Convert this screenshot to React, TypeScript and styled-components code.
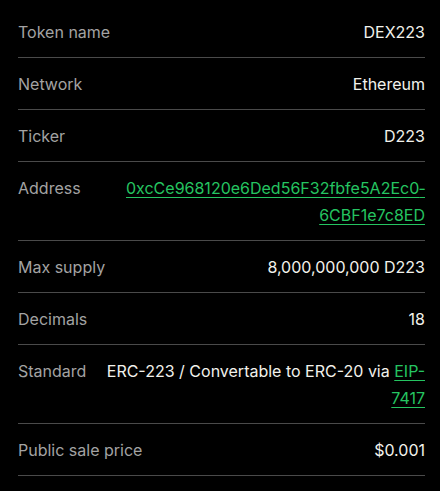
import React from 'react';
import styled, { createGlobalStyle } from 'styled-components';

const GlobalStyle = createGlobalStyle`
  html, body {
    margin: 0;
    padding: 0;
    background: #000;
  }
  body {
    font-family: Inter, "Noto Sans", sans-serif;
  }
`;

const Panel = styled.div`
  width: 440px;
  min-height: 491px;
  box-sizing: border-box;
  padding: 6px 15px 0 18px;
  background: #000;
`;

const Row = styled.div`
  display: flex;
  align-items: flex-start;
  justify-content: space-between;
  gap: 18px;
  padding: 13px 0 11px;
  border-bottom: 1px solid #4a4a4a;
  font-size: 16px;
  line-height: 27px;
`;

const Label = styled.div`
  flex: none;
  color: #a3a3a3;
`;

const Value = styled.div`
  flex: 1;
  text-align: right;
  color: #f2f2ec;
  font-weight: 400;
`;

const Link = styled.a`
  color: #25c461;
  font-weight: 400;
  text-decoration: underline;
  text-underline-offset: 3px;
`;

interface Item {
  label: string;
  value: React.ReactNode;
}

const items: Item[] = [
  { label: 'Token name', value: 'DEX223' },
  { label: 'Network', value: 'Ethereum' },
  { label: 'Ticker', value: 'D223' },
  {
    label: 'Address',
    value: <Link href="#">{'0xcCe968120e6Ded56F32fbfe5A2Ec0\u00AD6CBF1e7c8ED'}</Link>
  },
  { label: 'Max supply', value: '8,000,000,000 D223' },
  { label: 'Decimals', value: '18' },
  {
    label: 'Standard',
    value: (
      <>
        ERC-223 / Convertable to ERC-20 via <Link href="#">EIP-7417</Link>
      </>
    )
  },
  { label: 'Public sale price', value: '$0.001' }
];

const App: React.FC = () => {
  return (
    <>
      <GlobalStyle />
      <Panel>
        {items.map((item) => (
          <Row key={item.label}>
            <Label>{item.label}</Label>
            <Value>{item.value}</Value>
          </Row>
        ))}
      </Panel>
    </>
  );
};

export default App;
